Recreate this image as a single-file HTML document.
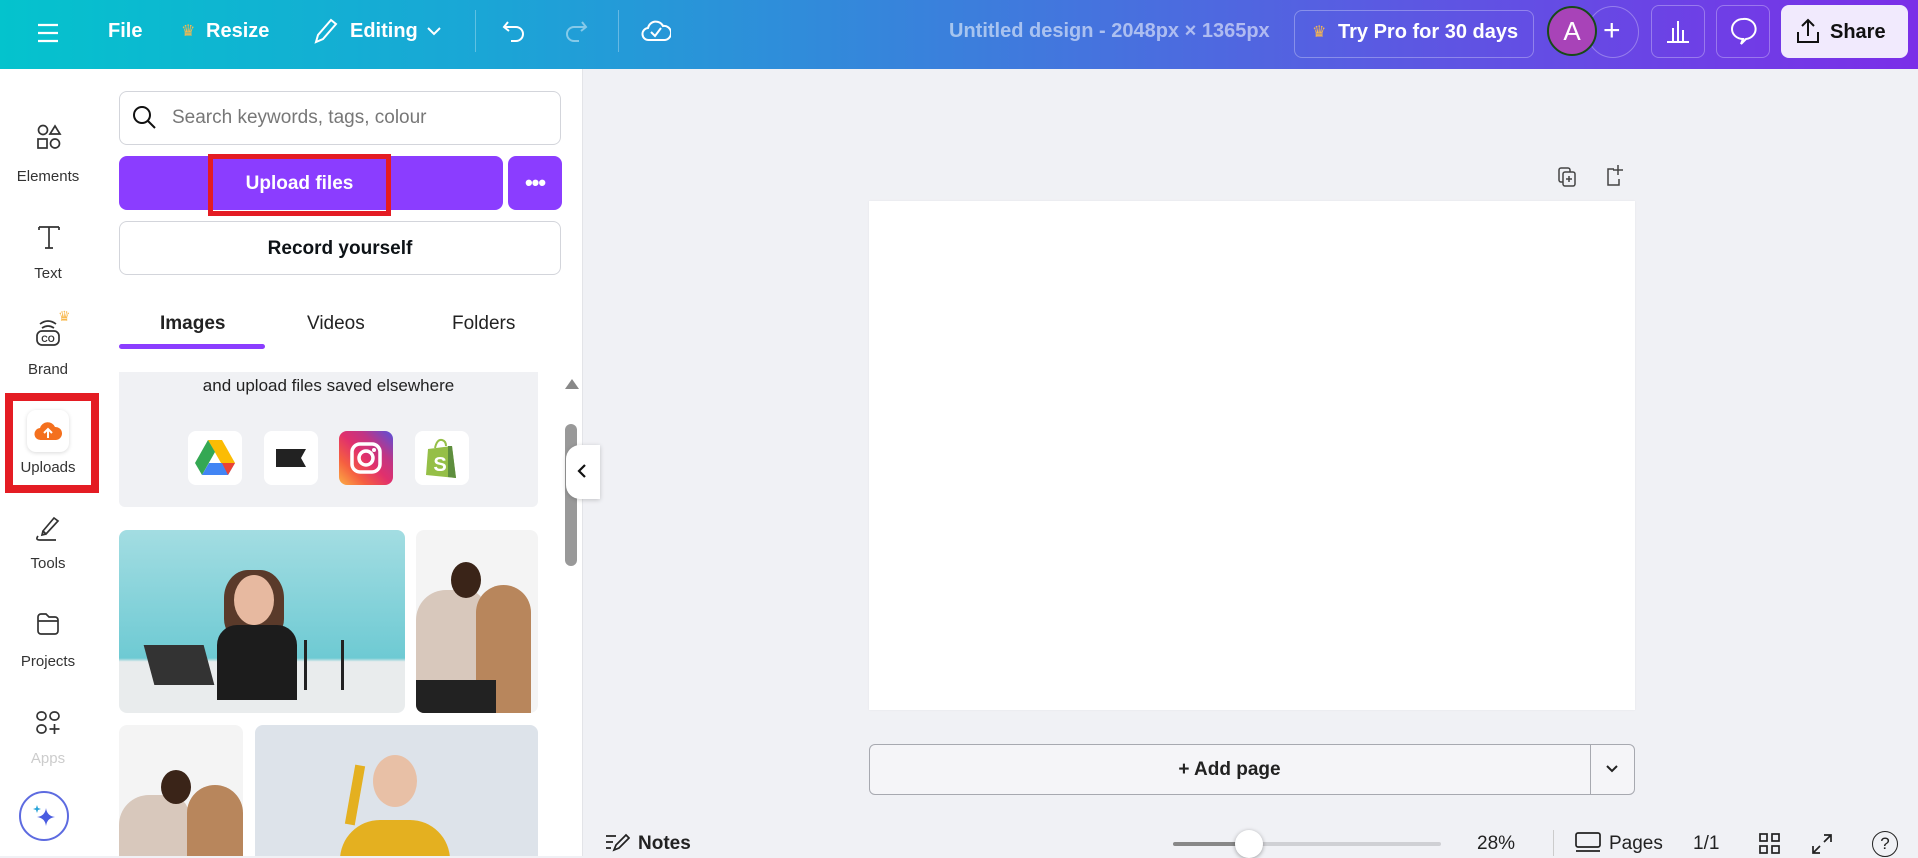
<!DOCTYPE html>
<html><head><meta charset="utf-8"><style>
*{box-sizing:border-box;margin:0;padding:0}
body{width:1918px;height:856px;overflow:hidden;font-family:"Liberation Sans",sans-serif;background:#f0f1f5;position:relative;color:#0d1216}
.a{position:absolute}
.top{left:0;top:0;width:1918px;height:69px;background:linear-gradient(90deg,#04c3cd 0%,#1aa6d6 25%,#3b7fdc 50%,#5a5ae2 72%,#7b2ee8 100%)}
.tw{color:#fff;font-weight:bold;font-size:20px}
.rail{left:0;top:69px;width:100px;height:787px;background:#fff}
.lbl{width:100px;text-align:center;font-size:15px;color:#333}
.panel{left:100px;top:69px;width:483px;height:787px;background:#fff;border-right:1px solid #e3e4e8}
.box{border:1px solid #d3d5db;border-radius:8px;background:#fff}
.tab{font-size:19px;color:#222;top:313px}
.ic{width:54px;height:54px;border-radius:8px;background:#fff;top:431px}
</style></head><body>
<div class="a top"></div>
<svg class="a" style="left:36px;top:22px" width="24" height="22"><path d="M2 3h20M2 11h20M2 19h20" stroke="#fff" stroke-width="2.2"/></svg>
<div class="a tw" style="left:108px;top:20px">File</div>
<div class="a" style="left:181px;top:21px;color:#f8b84e;font-size:16px">♛</div>
<div class="a tw" style="left:206px;top:20px">Resize</div>
<svg class="a" style="left:312px;top:16px" width="26" height="30"><path d="M4 26l2-7L19 4l5 4-13 15z M4 26l7-3" stroke="#fff" stroke-width="2" fill="none"/></svg>
<div class="a tw" style="left:350px;top:20px">Editing</div>
<svg class="a" style="left:426px;top:25px" width="16" height="12"><path d="M2 3l6 6 6-6" stroke="#fff" stroke-width="2" fill="none"/></svg>
<div class="a" style="left:475px;top:10px;width:1px;height:42px;background:rgba(255,255,255,.3)"></div>
<svg class="a" style="left:501px;top:18px" width="26" height="26"><path d="M7 4L3 9l5 4M3 9h12a7 7 0 010 14h-5" stroke="#fff" stroke-width="2" fill="none"/></svg>
<svg class="a" style="left:563px;top:18px" width="26" height="26" opacity=".45"><path d="M19 4l4 5-5 4M23 9H11a7 7 0 000 14h5" stroke="#fff" stroke-width="2" fill="none"/></svg>
<div class="a" style="left:618px;top:10px;width:1px;height:42px;background:rgba(255,255,255,.3)"></div>
<svg class="a" style="left:641px;top:16px" width="30" height="28"><path d="M8 24a6 6 0 01-1-12 8 8 0 0115-2 6 6 0 012 14z M10 16l4 4 6-8" stroke="#fff" stroke-width="2" fill="none"/></svg>
<div class="a" style="left:949px;top:20px;font-size:20px;font-weight:bold;color:rgba(255,255,255,.55)">Untitled design - 2048px × 1365px</div>
<div class="a" style="left:1294px;top:10px;width:240px;height:48px;border:1px solid rgba(255,255,255,.3);border-radius:8px"></div>
<div class="a" style="left:1312px;top:22px;color:#f8b84e;font-size:16px">♛</div>
<div class="a tw" style="left:1338px;top:21px">Try Pro for 30 days</div>
<div class="a" style="left:1587px;top:6px;height:52px;border:1px solid rgba(255,255,255,.3);border-radius:26px;width:52px"></div>
<div class="a" style="left:1547px;top:6px;width:50px;height:50px;border-radius:50%;background:#a843b8;border:2px solid #174a17;color:#fff;font-size:26px;text-align:center;line-height:46px">A</div>
<div class="a" style="left:1603px;top:14px;color:#fff;font-size:30px;font-weight:300">+</div>
<div class="a" style="left:1651px;top:5px;width:54px;height:53px;border:1px solid rgba(255,255,255,.3);border-radius:8px"></div>
<svg class="a" style="left:1664px;top:18px" width="28" height="26"><path d="M3 24h22M9 23V10M14 23V3M19 23V12" stroke="#fff" stroke-width="2" fill="none"/></svg>
<div class="a" style="left:1716px;top:5px;width:54px;height:53px;border:1px solid rgba(255,255,255,.3);border-radius:8px"></div>
<svg class="a" style="left:1729px;top:16px" width="28" height="30"><path d="M14 3a11 10 0 100 20l-2 5 5-5a11 10 0 00-3-20z" stroke="#fff" stroke-width="2" fill="none"/></svg>
<div class="a" style="left:1781px;top:5px;width:127px;height:53px;background:#f1eafd;border-radius:8px"></div>
<svg class="a" style="left:1794px;top:16px" width="28" height="30"><path d="M14 20V4M8 10l6-6 6 6M4 16v10h20V16" stroke="#111" stroke-width="2" fill="none"/></svg>
<div class="a" style="left:1830px;top:21px;font-size:20px;font-weight:bold;color:#111">Share</div>

<div class="a rail"></div>
<svg class="a" style="left:36px;top:124px" width="26" height="26"><circle cx="7" cy="6" r="4.5" stroke="#333" stroke-width="1.7" fill="none"/><path d="M19 2l5 8h-10z" stroke="#333" stroke-width="1.7" fill="none"/><rect x="2" y="15" width="9" height="9" stroke="#333" stroke-width="1.7" fill="none"/><circle cx="19" cy="19.5" r="4.5" stroke="#333" stroke-width="1.7" fill="none"/></svg>
<div class="a lbl" style="left:-2px;top:168px">Elements</div>
<svg class="a" style="left:36px;top:224px" width="26" height="26"><path d="M3 3h20M13 3v21M9 24h8M3 3v3M23 3v3" stroke="#333" stroke-width="1.7" fill="none"/></svg>
<div class="a lbl" style="left:-2px;top:265px">Text</div>
<svg class="a" style="left:34px;top:318px" width="28" height="30"><path d="M6 6q8-6 16 0M8 10q6-4 12 0" stroke="#333" stroke-width="1.7" fill="none"/><rect x="3" y="13" width="22" height="14" rx="5" stroke="#333" stroke-width="1.7" fill="none"/><text x="14" y="24" font-size="9" text-anchor="middle" fill="#333" font-family="Liberation Sans" font-weight="bold">CO</text></svg>
<div class="a" style="left:58px;top:308px;color:#f8b84e;font-size:14px">♛</div>
<div class="a lbl" style="left:-2px;top:361px">Brand</div>
<div class="a" style="left:5px;top:393px;width:94px;height:100px;border:8px solid #e41c23"></div>
<div class="a" style="left:27px;top:410px;width:42px;height:42px;border-radius:9px;background:#fff;box-shadow:0 1px 4px rgba(0,0,0,.15)"></div>
<svg class="a" style="left:34px;top:418px" width="28" height="26"><path d="M7 22a6 6 0 01-1-12 8 8 0 0115-1 6 6 0 011 13z" fill="#f4701e"/><path d="M14 20v-8M10 15l4-4 4 4" stroke="#fff" stroke-width="2" fill="none"/></svg>
<div class="a lbl" style="left:-2px;top:459px;color:#333">Uploads</div>
<svg class="a" style="left:34px;top:514px" width="28" height="28"><path d="M9 17L20 4l4 3-12 13zM9 17l-1 4 4-1M4 22q-3 4 2 4h16" stroke="#333" stroke-width="1.7" fill="none"/></svg>
<div class="a lbl" style="left:-2px;top:555px">Tools</div>
<svg class="a" style="left:35px;top:611px" width="26" height="26"><path d="M3 6a3 3 0 013-3h5l3 3h6a3 3 0 013 3v11a3 3 0 01-3 3H6a3 3 0 01-3-3zM3 10h20" stroke="#333" stroke-width="1.7" fill="none"/></svg>
<div class="a lbl" style="left:-2px;top:653px">Projects</div>
<svg class="a" style="left:35px;top:710px" width="26" height="26"><rect x="2" y="2" width="9" height="8" rx="4" stroke="#333" stroke-width="1.7" fill="none"/><rect x="15" y="2" width="9" height="8" rx="4" stroke="#333" stroke-width="1.7" fill="none"/><rect x="2" y="15" width="9" height="8" rx="4" stroke="#333" stroke-width="1.7" fill="none"/><path d="M19.5 14v10M14.5 19h10" stroke="#333" stroke-width="1.7"/></svg>
<div class="a lbl" style="left:-2px;top:750px;color:#ccc">Apps</div>
<div class="a" style="left:19px;top:791px;width:50px;height:50px;border-radius:50%;border:2px solid #5d6be0;background:#fff"></div>
<svg class="a" style="left:31px;top:803px" width="28" height="28"><path d="M15 5q1 8 9 9-8 1-9 9-1-8-9-9 8-1 9-9z" fill="#4a5ce0"/><path d="M6 2l1 3 3 1-3 1-1 3-1-3-3-1 3-1z" fill="#27a3d8"/></svg>

<div class="a panel"></div>
<div class="a box" style="left:119px;top:91px;width:442px;height:54px"></div>
<svg class="a" style="left:131px;top:104px" width="28" height="28"><circle cx="11" cy="11" r="8" stroke="#111" stroke-width="2" fill="none"/><path d="M17 17l7 7" stroke="#111" stroke-width="2"/></svg>
<div class="a" style="left:172px;top:107px;font-size:19px;color:#777">Search keywords, tags, colour</div>
<div class="a" style="left:119px;top:156px;width:384px;height:54px;background:#8b3dff;border-radius:8px"></div>
<div class="a" style="left:508px;top:156px;width:54px;height:54px;background:#8b3dff;border-radius:8px;color:#fff;text-align:center;font-size:22px;line-height:54px;font-weight:bold;letter-spacing:-1px">•••</div>
<div class="a" style="left:208px;top:154px;width:183px;height:62px;border:5px solid #e41c23"></div>
<div class="a" style="left:208px;top:173px;width:183px;text-align:center;color:#fff;font-weight:bold;font-size:19px">Upload files</div>
<div class="a box" style="left:119px;top:221px;width:442px;height:54px;text-align:center;line-height:54px;font-weight:bold;font-size:19px">Record yourself</div>
<div class="a tab" style="left:160px;font-weight:bold">Images</div>
<div class="a tab" style="left:307px">Videos</div>
<div class="a tab" style="left:452px">Folders</div>
<div class="a" style="left:119px;top:344px;width:146px;height:5px;background:#8b3dff;border-radius:3px"></div>
<div class="a" style="left:119px;top:372px;width:419px;height:135px;background:#f0f1f4;border-radius:0 0 6px 6px"></div>
<div class="a" style="left:119px;top:376px;width:419px;text-align:center;font-size:17px;color:#222">and upload files saved elsewhere</div>
<div class="a ic" style="left:188px"><svg width="54" height="54"><path d="M20 9h14l13 23h-14z" fill="#fbbc04"/><path d="M20 9L7 32l7 12 13-23z" fill="#34a853"/><path d="M14 44h26l7-12H21z" fill="#4285f4"/><path d="M40 44l7-12H34z" fill="#ea4335"/></svg></div>
<div class="a ic" style="left:264px"><svg width="54" height="54"><path d="M12 18h30l-5 9 5 9H12z" fill="#222"/></svg></div>
<div class="a ic" style="left:339px;background:linear-gradient(45deg,#fcaf45,#f56040 25%,#e1306c 50%,#c13584 70%,#5851db)"><svg width="54" height="54"><rect x="13" y="13" width="28" height="28" rx="8" stroke="#fff" stroke-width="3.5" fill="none"/><circle cx="27" cy="27" r="7" stroke="#fff" stroke-width="3.5" fill="none"/><circle cx="35" cy="19" r="2" fill="#fff"/></svg></div>
<div class="a ic" style="left:415px"><svg width="54" height="54"><path d="M13 18l24-3 4 32-30-3z" fill="#95bf47"/><path d="M33 15l4 0 4 32-8-1z" fill="#5e8e3e"/><path d="M20 17q2-9 7-8 4 1 4 6" stroke="#95bf47" stroke-width="2" fill="none"/><text x="25" y="40" font-size="20" font-weight="bold" fill="#fff" font-family="Liberation Sans" text-anchor="middle">S</text></svg></div>
<div class="a" style="left:119px;top:530px;width:286px;height:183px;border-radius:8px;overflow:hidden;background:linear-gradient(180deg,#a3dde2,#6ecad3 70%,#e9eced 72%)">
 <div class="a" style="left:105px;top:40px;width:60px;height:70px;border-radius:40% 40% 30% 30%;background:#5a3a2a"></div>
 <div class="a" style="left:115px;top:45px;width:40px;height:50px;border-radius:50%;background:#e7b9a0"></div>
 <div class="a" style="left:98px;top:95px;width:80px;height:75px;background:#1c1c1c;border-radius:20px 20px 0 0"></div>
 <div class="a" style="left:30px;top:115px;width:60px;height:40px;background:#333;transform:skewX(15deg)"></div>
 <div class="a" style="left:185px;top:110px;width:40px;height:50px;border-left:3px solid #222;border-right:3px solid #222"></div>
</div>
<div class="a" style="left:416px;top:530px;width:122px;height:183px;border-radius:8px;overflow:hidden;background:#f4f4f4">
 <div class="a" style="left:0;top:60px;width:70px;height:123px;background:#d8c8bc;border-radius:30px 20px 0 0"></div>
 <div class="a" style="left:35px;top:32px;width:30px;height:36px;border-radius:50%;background:#3a2418"></div>
 <div class="a" style="left:60px;top:55px;width:55px;height:128px;background:#b8865c;border-radius:30px 30px 0 0"></div>
 <div class="a" style="left:0;top:150px;width:80px;height:33px;background:#222"></div>
</div>
<div class="a" style="left:119px;top:725px;width:124px;height:131px;border-radius:8px 8px 0 0;overflow:hidden;background:#f4f4f4">
 <div class="a" style="left:0;top:70px;width:70px;height:70px;background:#d8c8bc;border-radius:30px 20px 0 0"></div>
 <div class="a" style="left:42px;top:45px;width:30px;height:34px;border-radius:50%;background:#3a2418"></div>
 <div class="a" style="left:68px;top:60px;width:56px;height:80px;background:#b8865c;border-radius:30px 30px 0 0"></div>
</div>
<div class="a" style="left:255px;top:725px;width:283px;height:131px;border-radius:8px 8px 0 0;overflow:hidden;background:#dde3ea">
 <div class="a" style="left:118px;top:30px;width:44px;height:52px;border-radius:50%;background:#e8c0a6"></div>
 <div class="a" style="left:85px;top:95px;width:110px;height:50px;background:#e4b020;border-radius:40px 40px 0 0"></div>
 <div class="a" style="left:95px;top:40px;width:10px;height:60px;background:#e4b020;transform:rotate(10deg)"></div>
</div>
<div class="a" style="left:565px;top:379px;width:0;height:0;border-left:7px solid transparent;border-right:7px solid transparent;border-bottom:10px solid #888"></div>
<div class="a" style="left:565px;top:424px;width:12px;height:142px;background:#999;border-radius:6px"></div>
<div class="a" style="left:566px;top:445px;width:34px;height:54px;background:#fff;border-radius:14px 0 0 14px;box-shadow:0 1px 5px rgba(0,0,0,.2)"></div>
<svg class="a" style="left:576px;top:463px" width="12" height="16"><path d="M9 2L3 8l6 6" stroke="#111" stroke-width="2.2" fill="none"/></svg>

<svg class="a" style="left:1556px;top:166px" width="22" height="22"><rect x="3" y="2" width="11" height="14" rx="2" stroke="#444" stroke-width="1.5" fill="none"/><rect x="7" y="6" width="12" height="14" rx="2" stroke="#444" stroke-width="1.5" fill="#f0f1f5"/><path d="M13 10v6M10 13h6" stroke="#444" stroke-width="1.5"/></svg>
<svg class="a" style="left:1604px;top:163px" width="22" height="24"><path d="M10 6H4v16h11v-6M14 2v10M9 7h10" stroke="#444" stroke-width="1.5" fill="none"/></svg>
<div class="a" style="left:869px;top:201px;width:766px;height:509px;background:#fff;box-shadow:0 0 2px rgba(0,0,0,.05)"></div>
<div class="a" style="left:869px;top:744px;width:766px;height:51px;border:1px solid #a7a9b0;border-radius:6px;background:#f5f5f8"></div>
<div class="a" style="left:1590px;top:744px;width:1px;height:51px;background:#a7a9b0"></div>
<div class="a" style="left:869px;top:759px;width:721px;text-align:center;font-size:19px;font-weight:bold;color:#222">+ Add page</div>
<svg class="a" style="left:1604px;top:762px" width="16" height="14"><path d="M3 4l5 5 5-5" stroke="#222" stroke-width="2" fill="none"/></svg>

<svg class="a" style="left:604px;top:832px" width="26" height="22"><path d="M2 4h10M2 10h7M2 16h5M10 18l2-5 10-10 3 3-10 10z" stroke="#222" stroke-width="1.7" fill="none"/></svg>
<div class="a" style="left:638px;top:833px;font-size:19px;font-weight:bold;color:#222">Notes</div>
<div class="a" style="left:1173px;top:842px;width:268px;height:4px;background:linear-gradient(90deg,#888 28%,#cfd0d4 28%);border-radius:2px"></div>
<div class="a" style="left:1235px;top:830px;width:28px;height:28px;border-radius:50%;background:#fff;box-shadow:0 1px 4px rgba(0,0,0,.35)"></div>
<div class="a" style="left:1477px;top:833px;font-size:19px;color:#222">28%</div>
<div class="a" style="left:1553px;top:830px;width:1px;height:26px;background:#ccc"></div>
<svg class="a" style="left:1574px;top:830px" width="28" height="24"><rect x="2" y="3" width="24" height="14" rx="2" stroke="#222" stroke-width="1.7" fill="none"/><path d="M2 21h24" stroke="#222" stroke-width="1.7"/></svg>
<div class="a" style="left:1609px;top:833px;font-size:19px;color:#222">Pages</div>
<div class="a" style="left:1693px;top:833px;font-size:19px;color:#222">1/1</div>
<svg class="a" style="left:1758px;top:832px" width="24" height="24"><g stroke="#222" stroke-width="1.7" fill="none"><rect x="2" y="2" width="7" height="7"/><rect x="14" y="2" width="7" height="7"/><rect x="2" y="14" width="7" height="7"/><rect x="14" y="14" width="7" height="7"/></g></svg>
<svg class="a" style="left:1810px;top:832px" width="24" height="24"><path d="M14 3h7v7M21 3l-7 7M10 21H3v-7M3 21l7-7" stroke="#222" stroke-width="1.7" fill="none"/></svg>
<div class="a" style="left:1872px;top:831px;width:26px;height:26px;border:1.8px solid #222;border-radius:50%;text-align:center;font-size:17px;line-height:23px;color:#222">?</div>
</body></html>
